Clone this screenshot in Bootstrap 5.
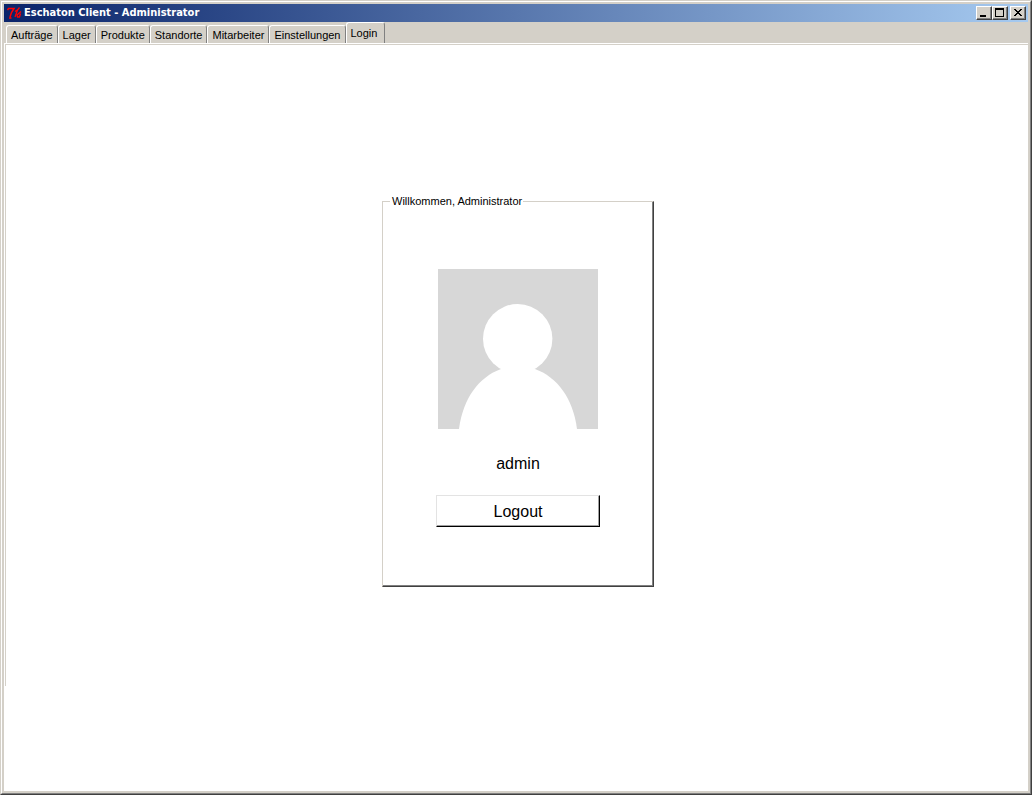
<!DOCTYPE html>
<html lang="de">
<head>
<meta charset="utf-8">
<meta name="viewport" content="width=device-width, initial-scale=1">
<title>Eschaton Client - Administrator</title>
<link href="https://cdn.jsdelivr.net/npm/bootstrap@5.3.0/dist/css/bootstrap.min.css" rel="stylesheet">
<style>
  :root { --face: #d4d0c8; }
  body { font: 11px/13px "Liberation Sans", sans-serif; color: #000; background: #fff; }
  .win { border: 1px solid; border-color: var(--face) #404040 #404040 var(--face); }
  .win-edge { border: 1px solid; border-color: #fff #808080 #808080 #fff; }
  .win-frame { border: 2px solid var(--face); }
  .titlebar { height: 18px; padding: 0 2px 0 3px; background: linear-gradient(to right, #0a246a, #a6caf0); }
  .titlebar h1 { padding-left: 1px; font: bold 11px/18px "DejaVu Sans Condensed", "DejaVu Sans", sans-serif; }
  .ctl { width: 16px; height: 14px; background: var(--face); border: 1px solid; border-color: #fff #404040 #404040 #fff; box-shadow: inset -1px -1px #808080; border-radius: 0; }
  .ctl-close { margin-left: 2px; }
  .tabstrip { height: 21px; padding-left: 2px; background: var(--face); }
  .tab { height: 18px; padding: 1px 4px 0 4px; background: var(--face); color: #000; border: 1px solid; border-color: #fff #808080 transparent #fff; border-bottom: 0; border-radius: 3px 3px 0 0; font-size: 11px; line-height: 13px; white-space: nowrap; }
  .tab.active { height: 21px; padding: 0 7px 0 4px; }
  .pane { border-top: 1px solid #fff; padding-left: 1px; margin-bottom: 105px; }
  .pane-inner { border: solid var(--face); border-width: 1px 0 0 1px; padding: 150px 0 0 2px; }
  .login-box { width: 272px; height: 392px; border: 1px solid; border-color: var(--face) #404040 #404040 var(--face); box-shadow: inset -1px -1px #808080; padding: 61px 0 0; }
  .login-box legend { float: none; width: auto; margin: 0 auto 0 7px; padding: 0 1px 0 2px; font-size: 11px; line-height: 13px; }
  .user-name { font: 16px/20px "Liberation Sans", sans-serif; margin: 25px 0 21px; }
  .logout { width: 164px; height: 32px; padding: 2px 0 0; font: 16px/28px "Liberation Sans", sans-serif; color: #000; background: #fff; border: 1px solid; border-color: #e3e3e3 #000 #000 #e3e3e3; border-radius: 0; box-shadow: inset -1px -1px #a0a0a0; }
</style>
</head>
<body>
<div class="win vh-100 d-flex flex-column">
 <div class="win-edge flex-grow-1 d-flex flex-column">
  <div class="win-frame flex-grow-1 d-flex flex-column">
   <header class="titlebar d-flex align-items-center text-white">
    <svg width="16" height="16" viewBox="0 0 16 16" fill="none" stroke="#f00" aria-hidden="true">
     <path d="M.5 5 1.500 3.500H7L4.500 7.500 3 12M2 13H4.500" stroke-width="1.500"/>
     <path d="M12.500 2.500 10.500 5 8 12M14 6.500 10 10M13.500 8.500 12.500 12H10.500L10 10M8 6.500 11 4.500" stroke-width="1.300"/>
    </svg>
    <h1 class="m-0 me-auto">Eschaton Client - Administrator</h1>
    <button type="button" class="ctl p-0 d-flex" aria-label="Minimieren"><svg width="14" height="12" aria-hidden="true"><path d="M3 8h6v2H3z"/></svg></button>
    <button type="button" class="ctl p-0 d-flex" aria-label="Maximieren"><svg width="14" height="12" aria-hidden="true"><path fill-rule="evenodd" d="M2 1h9v9H2zM3 3v6h7V3z"/></svg></button>
    <button type="button" class="ctl ctl-close p-0 d-flex" aria-label="Schließen"><svg width="14" height="12" shape-rendering="crispEdges" aria-hidden="true"><path d="M3 2h2v1h1v1h2V3h1V2h2v1h-1v1H9v1H8v1h1v1h1v1h1v1H9V8H8V7H6v1H5v1H3V8h1V7h1V6h1V5H5V4H4V3H3z"/></svg></button>
   </header>
   <div class="tabstrip d-flex align-items-end" role="tablist">
    <button type="button" class="tab" role="tab">Aufträge</button>
    <button type="button" class="tab" role="tab">Lager</button>
    <button type="button" class="tab" role="tab">Produkte</button>
    <button type="button" class="tab" role="tab">Standorte</button>
    <button type="button" class="tab" role="tab">Mitarbeiter</button>
    <button type="button" class="tab" role="tab">Einstellungen</button>
    <button type="button" class="tab active" role="tab" aria-selected="true">Login</button>
   </div>
   <main class="pane flex-grow-1 d-flex">
    <div class="pane-inner flex-grow-1 d-flex justify-content-center align-items-start">
     <fieldset class="login-box text-center">
      <legend>Willkommen, Administrator</legend>
      <svg class="d-block mx-auto" width="160" height="160" viewBox="0 0 160 160" role="img" aria-label="Profilbild">
       <path fill="#d7d7d7" d="M0 0h160v160H0z"/>
       <circle cx="79.700" cy="69.700" r="34.700" fill="#fff"/>
       <path fill="#fff" d="M21 160C25 129 41 108 63 100H97C119 108 135 129 139 160Z"/>
      </svg>
      <p class="user-name">admin</p>
      <button type="button" class="logout">Logout</button>
     </fieldset>
    </div>
   </main>
  </div>
 </div>
</div>
<script src="https://cdn.jsdelivr.net/npm/bootstrap@5.3.0/dist/js/bootstrap.bundle.min.js"></script>
</body>
</html>
